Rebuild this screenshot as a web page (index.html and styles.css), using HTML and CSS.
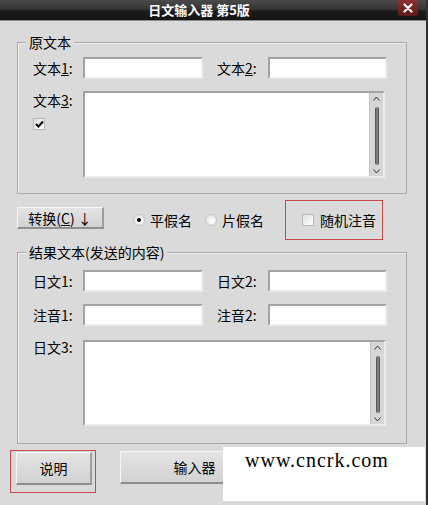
FILE: index.html
```html
<!DOCTYPE html>
<html lang="zh-CN">
<head>
  <meta charset="UTF-8" />
  <meta name="viewport" content="width=device-width, initial-scale=1" />
  <title>日文输入器 第5版</title>
  <link rel="stylesheet" href="styles.css">
</head>
<body>

  <div class="window">
    <div class="titlebar">
      <span class="title">日文输入器 第5版</span>
      <span class="close">
        <svg width="10" height="10" viewBox="0 0 10 10"><path d="M1.5 1.5 L8.5 8.5 M8.5 1.5 L1.5 8.5" stroke="#f2f2f2" stroke-width="2.2" stroke-linecap="round"/></svg>
      </span>
    </div>

    <div class="content">
      <div class="group group-source">
        <div class="group-title">原文本</div>
        <div class="fields">
          <label>文本<u>1</u>:</label>
          <div class="edit"></div>
          <label class="second">文本<u>2</u>:</label>
          <div class="edit"></div>

          <div class="label-stack">
            <label>文本<u>3</u>:</label>
            <span class="check">
              <svg width="9" height="8" viewBox="0 0 9 8"><path d="M1 4 L3.5 6.5 L8 1.5" fill="none" stroke="#000" stroke-width="2"/></svg>
            </span>
          </div>
          <div class="memo">
            <div class="scroll">
              <svg width="7" height="5" viewBox="0 0 7 5"><path d="M0.5 4.5 L3.5 1 L6.5 4.5" fill="none" stroke="#333" stroke-width="1"/></svg>
              <div class="thumb"></div>
              <svg width="7" height="5" viewBox="0 0 7 5"><path d="M0.5 0.5 L3.5 4 L6.5 0.5" fill="none" stroke="#333" stroke-width="1"/></svg>
            </div>
          </div>
        </div>
      </div>

      <div class="options">
        <button class="btn convert">转换(<u>C</u>) ↓</button>
        <div class="radios">
          <span class="radio checked"></span><span class="radio-text">平假名</span>
          <span class="radio"></span><span class="radio-text">片假名</span>
        </div>
        <div class="marked random">
          <span class="check"></span>
          <span>随机注音</span>
        </div>
      </div>

      <div class="group group-result">
        <div class="group-title">结果文本(发送的内容)</div>
        <div class="fields">
          <label>日文1:</label>
          <div class="edit"></div>
          <label class="second">日文2:</label>
          <div class="edit"></div>

          <label>注音1:</label>
          <div class="edit"></div>
          <label class="second">注音2:</label>
          <div class="edit"></div>

          <div class="label-stack">
            <label>日文3:</label>
          </div>
          <div class="memo memo-result">
            <div class="scroll">
              <svg width="7" height="5" viewBox="0 0 7 5"><path d="M0.5 4.5 L3.5 1 L6.5 4.5" fill="none" stroke="#333" stroke-width="1"/></svg>
              <div class="thumb"></div>
              <svg width="7" height="5" viewBox="0 0 7 5"><path d="M0.5 0.5 L3.5 4 L6.5 0.5" fill="none" stroke="#333" stroke-width="1"/></svg>
            </div>
          </div>
        </div>
      </div>

      <div class="actions">
        <div class="marked help">
          <button class="btn">说明</button>
        </div>
        <button class="btn wide">输入器</button>
      </div>
    </div>

    <div class="watermark">www.cncrk.com</div>
  </div>

</body>
</html>
```

FILE: styles.css
```css
body {
  margin: 0;
  padding: 0;
  font-family: "Noto Sans CJK SC", "DejaVu Sans", sans-serif;
  font-size: 14px;
  color: #000;
  background: #dadada;
}

.window {
  position: relative;
  width: 426px;
  height: 505px;
  background: #dadada;
  border-right: 2px solid #2e2e2e;
  overflow: hidden;
}

.titlebar {
  display: grid;
  grid-template-columns: 1fr 20px;
  align-items: start;
  height: 20px;
  padding-right: 8px;
  background: linear-gradient(to bottom, #4a4a4a 0%, #363636 45%, #1c1c1c 55%, #141414 100%);
  border-bottom: 1px solid #8a8a8a;
}

.title {
  justify-self: center;
  color: #fff;
  font-weight: bold;
  font-size: 13px;
  line-height: 20px;
}

.close {
  display: flex;
  align-items: center;
  justify-content: center;
  height: 16px;
  background: linear-gradient(to bottom, #8a3030, #5c1a1a);
  border-radius: 0 0 3px 3px;
}

.content {
  padding: 21px 19px 0 17px;
}

.group {
  border: 1px solid #a9a9a9;
  box-shadow: inset 1px 1px 0 #f0f0f0;
}

.group-title {
  display: table;
  margin: -9px 0 0 8px;
  padding: 0 3px;
  line-height: 16px;
  background: #dadada;
}

.fields {
  display: grid;
  grid-template-columns: 50px 120px 65px 119px;
  row-gap: 12px;
  align-items: center;
  padding: 7px 19px 15px 15px;
}

.group-result .fields {
  padding-top: 10px;
  padding-bottom: 17px;
}

.group-result .memo {
  margin-top: 2px;
}

label {
  line-height: 16px;
  white-space: nowrap;
}

label.second {
  padding-left: 14px;
}

.edit {
  height: 18px;
  background: #fff;
  border-top: 2px solid #a3a3a3;
  border-left: 2px solid #a3a3a3;
  border-bottom: 2px solid #ececec;
  border-right: 2px solid #ececec;
}

.label-stack {
  align-self: start;
  display: flex;
  flex-direction: column;
  align-items: flex-start;
  gap: 10px;
  padding-top: 1px;
}

.check {
  display: flex;
  align-items: center;
  justify-content: center;
  width: 10px;
  height: 10px;
  background: linear-gradient(135deg, #dedede, #ffffff);
  border: 1px solid #b8b8b8;
}

.memo {
  grid-column: 2 / 5;
  justify-self: start;
  display: flex;
  justify-content: flex-end;
  width: 298px;
  height: 83px;
  background: #fff;
  border-top: 2px solid #a3a3a3;
  border-left: 2px solid #a3a3a3;
  border-bottom: 2px solid #ececec;
  border-right: 2px solid #ececec;
}

.memo-result {
  width: 299px;
  height: 82px;
}

.scroll {
  display: flex;
  flex-direction: column;
  align-items: center;
  width: 13px;
  padding: 3px 0 2px;
  background: #d6d6d6;
  border-left: 1px solid #c4c4c4;
}

.thumb {
  flex: 1;
  width: 4px;
  margin: 6px 0 4px;
  border-radius: 2px;
  background: linear-gradient(to right, #4a4a4a, #8c8c8c, #4a4a4a);
}

.options {
  display: flex;
  align-items: flex-start;
  margin-top: 6px;
  height: 40px;
}

.btn {
  font-family: "Noto Sans CJK SC", "DejaVu Sans", sans-serif;
  font-size: 14px;
  color: #000;
  padding: 0;
  background: linear-gradient(to bottom, #e4e4e4, #d2d2d2);
  border-top: 1px solid #f6f6f6;
  border-left: 1px solid #f6f6f6;
  border-bottom: 2px solid #8e8e8e;
  border-right: 2px solid #9e9e9e;
  cursor: pointer;
}

.convert {
  width: 87px;
  height: 22px;
  margin-top: 7px;
  line-height: 18px;
}

.radios {
  display: flex;
  align-items: center;
  height: 40px;
  margin-left: 29px;
}

.radio {
  position: relative;
  width: 10px;
  height: 10px;
  border-radius: 50%;
  border: 1px solid #c6c6c6;
  background: radial-gradient(circle at 60% 60%, #ffffff, #d8d8d8);
}

.radio.checked::after {
  content: "";
  position: absolute;
  left: 3px;
  top: 3px;
  width: 4px;
  height: 4px;
  border-radius: 50%;
  background: #000;
}

.radio-text {
  margin-left: 5px;
  margin-right: 13px;
}

.marked {
  border: 1px solid #c84a4a;
  box-sizing: border-box;
}

.random {
  display: flex;
  align-items: center;
  gap: 6px;
  width: 98px;
  height: 40px;
  margin-left: 8px;
  padding-left: 16px;
}

.group-result {
  margin-top: 12px;
}

.actions {
  display: flex;
  align-items: flex-start;
  margin-top: 6px;
}

.help {
  width: 86px;
  height: 43px;
  margin-left: -7px;
  padding: 1px 0 0 5px;
}

.help .btn {
  width: 76px;
  height: 33px;
}

.wide {
  width: 150px;
  height: 33px;
  margin-top: 1px;
  margin-left: 24px;
}

.watermark {
  position: absolute;
  left: 223px;
  top: 447px;
  width: 202px;
  height: 54px;
  padding: 3px 0 0 22px;
  box-sizing: border-box;
  background: #fff;
  font-family: "Liberation Serif", serif;
  font-size: 20px;
  letter-spacing: 1px;
  line-height: 20px;
  color: #000;
}
```
